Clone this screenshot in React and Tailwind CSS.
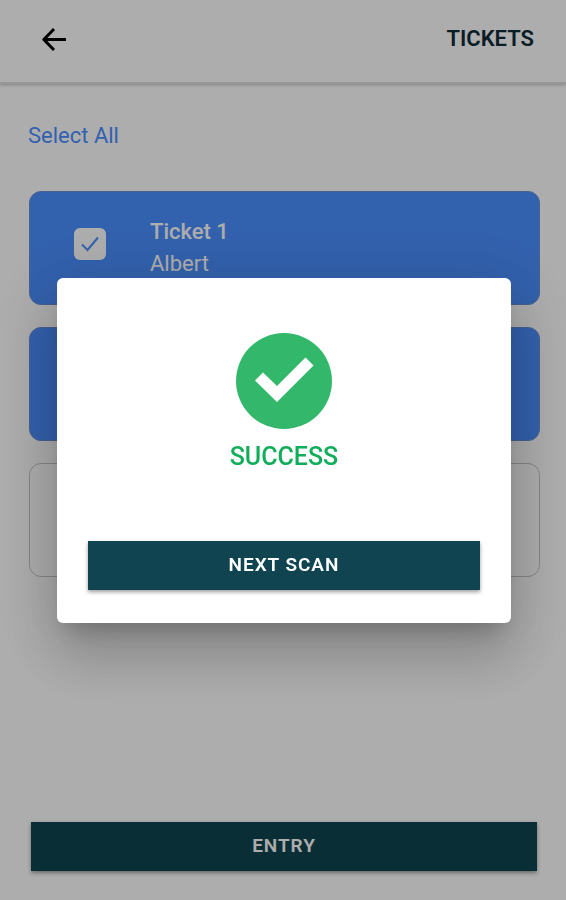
import React, { useState } from "react";
import clsx from "clsx";

const initialTickets = [
  { id: 1, title: "Ticket 1", holder: "Albert", selected: true },
  { id: 2, selected: true },
  { id: 3, selected: false },
];

const Header = () => (
  <header className="flex h-[84px] items-center justify-between border-b-2 border-[#dedede] pb-1 pl-10 pr-8 shadow-[0_1px_3px_rgba(0,0,0,0.25)]">
    <button type="button" aria-label="Back" className="text-black">
      <svg className="h-7 w-7" viewBox="0 0 28 28" fill="none" stroke="currentColor" strokeWidth="3">
        <path d="M26 14.5H4.5M14 4L3.8 14.5L14 25" strokeLinejoin="round" />
      </svg>
    </button>
    <h1 className="text-[22px] font-semibold leading-7 text-[#0f2c38]">TICKETS</h1>
  </header>
);

const TicketCard = ({ ticket, onToggle }) => (
  <li
    className={clsx(
      "flex h-[114px] items-center rounded-xl border pl-11",
      ticket.selected ? "border-[#6b8fd0] bg-[#4b8fff]" : "border-[#c4c4c4] bg-white"
    )}
  >
    {ticket.title && (
      <label className="flex items-start gap-11">
        <span className="relative mt-3 flex h-8 w-8">
          <input
            type="checkbox"
            checked={ticket.selected}
            onChange={() => onToggle(ticket.id)}
            className="h-8 w-8 appearance-none rounded-md bg-white"
          />
          {ticket.selected && (
            <svg
              className="pointer-events-none absolute inset-0 h-8 w-8 text-[#4b8fff]"
              viewBox="0 0 32 32"
              fill="none"
              stroke="currentColor"
              strokeWidth="2"
            >
              <path d="M8 16.5L13.5 22L24 9.5" />
            </svg>
          )}
        </span>
        <span className="flex flex-col text-[22px] leading-8 text-white">
          <span className="font-medium">{ticket.title}</span>
          <span>{ticket.holder}</span>
        </span>
      </label>
    )}
  </li>
);

const ActionButton = ({ children, onClick }) => (
  <button
    type="button"
    onClick={onClick}
    className="h-[49px] w-full bg-[#0f4450] text-[19px] font-semibold tracking-wider text-white shadow-[0_2px_4px_rgba(0,0,0,0.4)]"
  >
    {children}
  </button>
);

const SuccessDialog = ({ onClose }) => (
  <div className="fixed inset-0 flex items-center justify-center bg-black/32 pl-[57px] pr-[55px]">
    <div
      role="dialog"
      aria-modal="true"
      aria-labelledby="dialog-title"
      className="flex w-full flex-col items-center rounded-md bg-white px-[31px] pb-[33px] pt-[55px] shadow-[0_16px_21px_-10px_rgba(0,0,0,0.2),0_34px_54px_4px_rgba(0,0,0,0.14),0_13px_65px_11px_rgba(0,0,0,0.12)]"
    >
      <svg className="h-24 w-24" viewBox="0 0 96 96">
        <circle cx="48" cy="48" r="48" fill="#33b86b" />
        <path d="M19 47.5L27 39.5L41 53L69.5 24.5L77.5 32.5L41 69Z" fill="white" />
      </svg>
      <h2 id="dialog-title" className="mb-[68px] mt-3 text-[25px] font-medium leading-8 text-[#12ad5b]">
        SUCCESS
      </h2>
      <ActionButton onClick={onClose}>NEXT SCAN</ActionButton>
    </div>
  </div>
);

const App = () => {
  const [tickets, setTickets] = useState(initialTickets);
  const [dialogOpen, setDialogOpen] = useState(true);

  const toggleTicket = (id) => {
    setTickets(tickets.map((t) => (t.id === id ? { ...t, selected: !t.selected } : t)));
  };

  const selectAll = () => setTickets(tickets.map((t) => ({ ...t, selected: true })));

  return (
    <div className="flex min-h-screen flex-col bg-white font-['Roboto',sans-serif]">
      <Header />

      <main className="flex flex-1 flex-col items-start pl-7 pr-[26px] pt-9">
        <button type="button" onClick={selectAll} className="text-[22px] leading-8 text-[#4b8fff]">
          Select All
        </button>
        <ul className="mt-[39px] flex w-full flex-col gap-[22px] pl-px">
          {tickets.map((ticket) => (
            <TicketCard key={ticket.id} ticket={ticket} onToggle={toggleTicket} />
          ))}
        </ul>
      </main>

      <footer className="pb-[29px] pl-[31px] pr-[29px]">
        <ActionButton onClick={() => setDialogOpen(true)}>ENTRY</ActionButton>
      </footer>

      {dialogOpen && <SuccessDialog onClose={() => setDialogOpen(false)} />}
    </div>
  );
};

export default App;
